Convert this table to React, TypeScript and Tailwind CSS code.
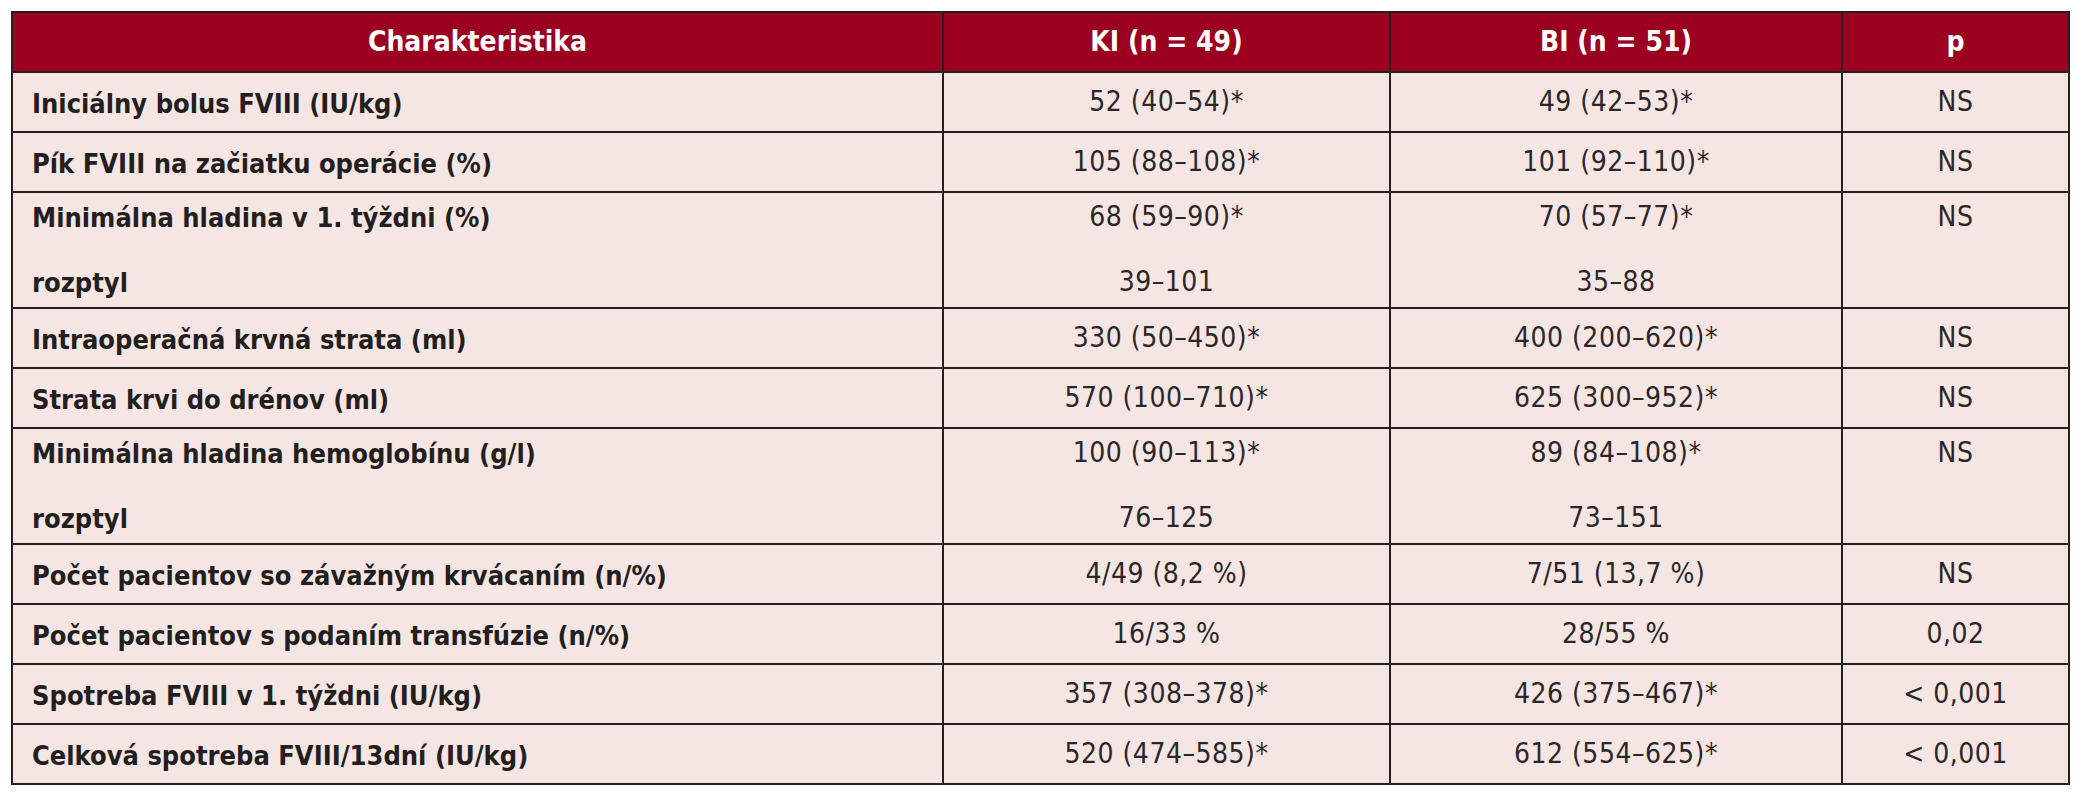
type Row = {
  label: string;
  sub?: string;
  ki: string;
  kiSub?: string;
  bi: string;
  biSub?: string;
  p: string;
};

const ROWS: Row[] = [
  { label: "Iniciálny bolus FVIII (IU/kg)", ki: "52 (40–54)*", bi: "49 (42–53)*", p: "NS" },
  { label: "Pík FVIII na začiatku operácie (%)", ki: "105 (88–108)*", bi: "101 (92–110)*", p: "NS" },
  {
    label: "Minimálna hladina v 1. týždni (%)",
    sub: "rozptyl",
    ki: "68 (59–90)*",
    kiSub: "39–101",
    bi: "70 (57–77)*",
    biSub: "35–88",
    p: "NS",
  },
  { label: "Intraoperačná krvná strata (ml)", ki: "330 (50–450)*", bi: "400 (200–620)*", p: "NS" },
  { label: "Strata krvi do drénov (ml)", ki: "570 (100–710)*", bi: "625 (300–952)*", p: "NS" },
  {
    label: "Minimálna hladina hemoglobínu (g/l)",
    sub: "rozptyl",
    ki: "100 (90–113)*",
    kiSub: "76–125",
    bi: "89 (84–108)*",
    biSub: "73–151",
    p: "NS",
  },
  { label: "Počet pacientov so závažným krvácaním (n/%)", ki: "4/49 (8,2 %)", bi: "7/51 (13,7 %)", p: "NS" },
  { label: "Počet pacientov s podaním transfúzie (n/%)", ki: "16/33 %", bi: "28/55 %", p: "0,02" },
  { label: "Spotreba FVIII v 1. týždni (IU/kg)", ki: "357 (308–378)*", bi: "426 (375–467)*", p: "< 0,001" },
  { label: "Celková spotreba FVIII/13dní (IU/kg)", ki: "520 (474–585)*", bi: "612 (554–625)*", p: "< 0,001" },
];

const cell = "border-2 border-[#231f20]";
const labelText = "font-bold text-[27px] leading-none text-[#231f20]";
const valueText = "text-[28px] leading-none tracking-[0.5px] text-[#2b2728]";

const Value = ({ main, sub }: { main: string; sub?: string }) =>
  sub === undefined ? (
    <>{main}</>
  ) : (
    <div className="flex flex-col">
      <span>{main}</span>
      <span className="mt-[37px]">{sub}</span>
    </div>
  );

export default function App() {
  return (
    <div className="min-h-screen bg-white pt-[11px] pl-[11px] font-stretch-condensed font-['DejaVu_Sans_Condensed','DejaVu_Sans',sans-serif]">
      <table className="table-fixed border-collapse w-[2057px] bg-[#f5e6e3]">
        <colgroup>
          <col className="w-[931px]" />
          <col className="w-[447px]" />
          <col className="w-[452px]" />
          <col className="w-[227px]" />
        </colgroup>
        <thead>
          <tr className="h-[60px] bg-[#9b0020] text-white">
            {["Charakteristika", "KI (n = 49)", "BI (n = 51)", "p"].map((h) => (
              <th
                key={h}
                className={`${cell} font-bold text-[28px] leading-none text-center align-middle`}
              >
                {h}
              </th>
            ))}
          </tr>
        </thead>
        <tbody>
          {ROWS.map((row) => {
            const double = row.sub !== undefined;
            return (
              <tr key={row.label} className={double ? "h-[116px]" : "h-[60px]"}>
                <td
                  className={`${cell} ${labelText} pl-[19px] ${
                    double ? "align-top pt-[11px]" : "align-middle pt-[2px]"
                  }`}
                >
                  {double ? (
                    <div className="flex flex-col">
                      <span>{row.label}</span>
                      <span className="mt-[38px]">{row.sub}</span>
                    </div>
                  ) : (
                    row.label
                  )}
                </td>
                <td
                  className={`${cell} ${valueText} text-center ${
                    double ? "align-top pt-[10px]" : "align-middle"
                  }`}
                >
                  <Value main={row.ki} sub={row.kiSub} />
                </td>
                <td
                  className={`${cell} ${valueText} text-center ${
                    double ? "align-top pt-[10px]" : "align-middle"
                  }`}
                >
                  <Value main={row.bi} sub={row.biSub} />
                </td>
                <td
                  className={`${cell} ${valueText} text-center ${
                    double ? "align-top pt-[10px]" : "align-middle"
                  }`}
                >
                  {row.p}
                </td>
              </tr>
            );
          })}
        </tbody>
      </table>
    </div>
  );
}
